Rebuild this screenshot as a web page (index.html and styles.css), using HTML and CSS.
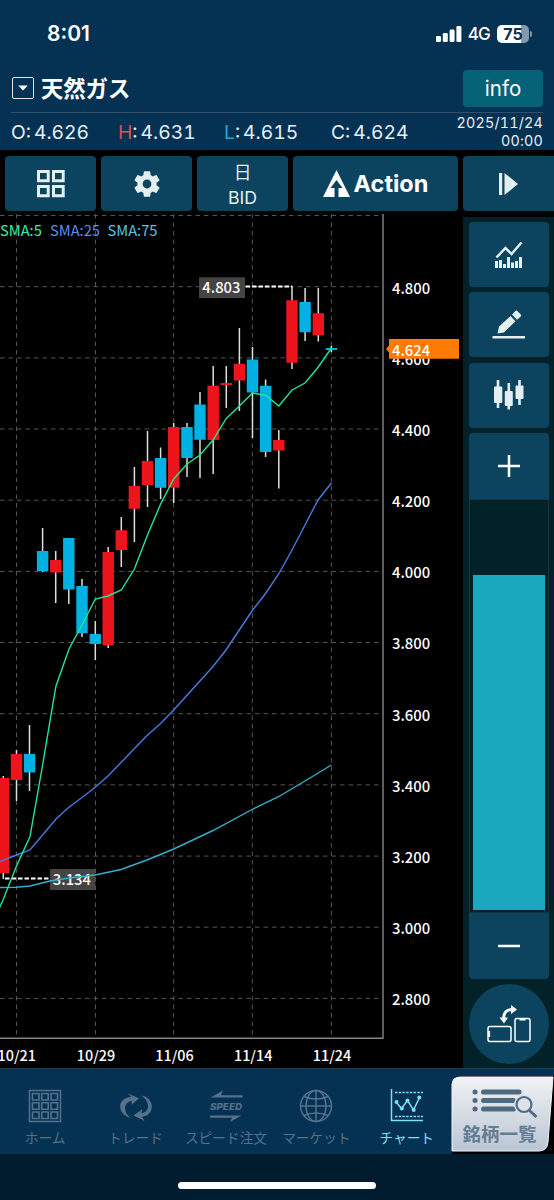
FILE: index.html
```html
<!DOCTYPE html>
<html lang="ja">
  <head>
    <meta charset="UTF-8" />
    <meta name="viewport" content="width=device-width, initial-scale=1.0" />
    <title>天然ガス チャート</title>
    <link rel="stylesheet" href="styles.css">
  </head>
  <body>
    <header class="header">
      <div class="status-bar">
        <span class="clock">8:01</span>
        <div class="status-right">
          <svg class="signal" width="26" height="16" viewBox="0 0 26 16" fill="#fff">
            <rect x="0" y="10" width="5" height="6" rx="1.3" />
            <rect x="6.8" y="7" width="5" height="9" rx="1.3" />
            <rect x="13.6" y="3.6" width="5" height="12.4" rx="1.3" />
            <rect x="20.4" y="0" width="5" height="16" rx="1.3" />
          </svg>
          <span class="network">4G</span>
          <span class="battery">75</span>
          <span class="battery-tip"></span>
        </div>
      </div>

      <div class="title-row">
        <span class="dropdown"><svg width="20" height="20" viewBox="0 0 20 20"><path d="M5.3 7.5h9.4L10 12.6z" fill="#fff" /></svg></span>
        <h1>天然ガス</h1>
        <button class="info-button">info</button>
      </div>

      <div class="ohlc">
        <span class="open">O:<b>4.626</b></span>
        <span class="high"><i>H</i>:<b>4.631</b></span>
        <span class="low"><i>L</i>:<b>4.615</b></span>
        <span class="close">C:<b>4.624</b></span>
        <div class="date">2025/11/24<br>00:00</div>
      </div>
    </header>

    <nav class="toolbar">
      <button class="tool">
        <svg width="28" height="28" viewBox="0 0 28 28" fill="none" stroke="#e4eff2" stroke-width="3">
          <path d="M1.5 1.5h9.7v9.2H1.5zM16.5 1.5h9.7v9.2h-9.7zM1.5 16.5h9.7v9.2H1.5zM16.5 16.5h9.7v9.2h-9.7z" />
        </svg>
      </button>
      <button class="tool">
        <svg width="32" height="32" viewBox="0 0 24 24" fill="#e4eff2">
          <path d="M19.14 12.94c.04-.3.06-.61.06-.94 0-.32-.02-.64-.07-.94l2.03-1.58c.18-.14.23-.41.12-.61l-1.92-3.32c-.12-.22-.37-.29-.59-.22l-2.39.96c-.5-.38-1.03-.7-1.62-.94l-.36-2.54c-.04-.24-.24-.41-.48-.41h-3.84c-.24 0-.43.17-.47.41l-.36 2.54c-.59.24-1.13.57-1.62.94l-2.39-.96c-.22-.08-.47 0-.59.22L2.74 8.87c-.12.21-.08.47.12.61l2.03 1.58c-.05.3-.09.63-.09.94s.02.64.07.94l-2.03 1.58c-.18.14-.23.41-.12.61l1.92 3.32c.12.22.37.29.59.22l2.39-.96c.5.38 1.03.7 1.62.94l.36 2.54c.05.24.24.41.48.41h3.84c.24 0 .44-.17.47-.41l.36-2.54c.59-.24 1.13-.56 1.62-.94l2.39.96c.22.08.47 0 .59-.22l1.92-3.32c.12-.22.07-.47-.12-.61l-2.01-1.58zM12 15.3c-1.8 0-3.3-1.5-3.3-3.3s1.5-3.3 3.3-3.3 3.3 1.5 3.3 3.3-1.5 3.3-3.3 3.3z" />
        </svg>
      </button>
      <button class="tool period"><span>日</span><span>BID</span></button>
      <button class="tool action">
        <svg width="27" height="27" viewBox="0 0 27 27"><path d="M13.5 0L27 27h-11.5v-9h4L13.5 10l-6 8h4v9H0z" fill="#fff" /></svg>
        Action
      </button>
      <button class="tool last">
        <svg width="20" height="24" viewBox="0 0 20 24" fill="#e4eff2"><path d="M0 1h3.2v22H0zM5.5 1L19 12 5.5 23z" /></svg>
      </button>
    </nav>

    <main class="main">
      <svg class="chart" width="463" height="854" viewBox="0 214 463 854">
        <!-- grid -->
        <path class="grid" d="M0 215.5H383M0 286.7H383M0 357.9H383M0 429H383M0 500.2H383M0 571.4H383M0 642.5H383M0 713.7H383M0 784.9H383M0 856.1H383M0 927.2H383M0 998.4H383M16.5 214V1038M95.5 214V1038M173.7 214V1038M252.3 214V1038M331.4 214V1038" />
        <path class="axis" d="M0 1038.3H383V214" />

        <!-- wicks -->
        <path class="wick" d="M3.3 776V879M16.5 750V801M29.5 725V791M42.6 528V572M55.7 551V603M68.8 538V604M82 579V637M95.3 621V660M108.2 547V648M121.3 517V567M134.4 467V542M147.5 431V507M160.6 447.5V499M173.7 423V503M187 423V477M200 392V478M213.2 366V474M226.3 366V408M239.4 328V411M252.5 347V438M265.6 379.5V457M278.8 430V488.5M292 286V369M305.1 288V341M318.3 288V341.5M331.4 346V352" />

        <!-- candle bodies -->
        <path class="up" d="M3.3 778V873M16.5 754V780M55.7 560V572.5M108.2 552V645.3M121.3 530.3V550M134.4 486V508.7M147.5 461V485.3M173.7 427V487.7M213.2 385.7V440M226.3 383V385M239.4 363.8V380.5M278.8 440V450.5M292 300.3V362.8M318.3 313.3V335.3" />
        <path class="down" d="M29.5 754V772.5M42.6 551V571M68.8 538V589.4M82 586V633.3M95.3 634V644M160.6 458V487.7M187 427V458M200 404.4V439.8M252.5 359.4V392.4M265.6 385.8V452M305.1 302V332.3M331.4 348V350" />

        <!-- price marks -->
        <rect x="199" y="277.3" width="46" height="20.7" fill="#444" />
        <text class="mark" x="202.3" y="293.3">4.803</text>
        <path class="mark-line" d="M245.5 286.5H292" />
        <rect x="50" y="869" width="45.3" height="21" fill="#444" />
        <text class="mark" x="52.8" y="885.3">3.134</text>
        <path class="mark-line" d="M5 878.5H50" />

        <!-- moving averages -->
        <polyline class="sma75" points="0,887.5 16,887.3 30,886 50,881 69,878 95,875 121,869.5 147,860 173.7,849 213,830.5 252,809.5 279,796.5 305,781 331.4,765" />
        <polyline class="sma25" points="0,861.5 16.5,855 30,850 56,819 68,808 82,797.5 95.5,787 108,776 147,735.5 160.6,723.5 173.7,710 213,666.5 226,650 252.3,610.5 265.6,593.5 279,573.5 292,550 305,525 318,500 331.4,483" />
        <polyline class="sma5" points="-2,911 3,900 16.5,866 30,836.5 42.6,765 53.5,700 56,686 69,649 82,625 95.3,599 108,596 121.3,590 134.4,569 147.5,535 160.6,504 173.7,479 187,464 200,455 213,440 226.3,418.5 239.4,406 252.5,393 266,395.5 278.8,406 292,390 305,383 318.3,367 331.4,348" />

        <g class="legend">
          <text x="0" y="236" fill="#35f0a5">SMA:5</text>
          <text x="50" y="236" fill="#5f8def">SMA:25</text>
          <text x="107.5" y="236" fill="#57c3e0">SMA:75</text>
        </g>

        <g class="labels">
          <text x="392" y="293.5">4.800</text>
          <text x="392" y="364.5">4.600</text>
          <text x="392" y="435.8">4.400</text>
          <text x="392" y="507">4.200</text>
          <text x="392" y="578.2">4.000</text>
          <text x="392" y="649.3">3.800</text>
          <text x="392" y="720.5">3.600</text>
          <text x="392" y="791.7">3.400</text>
          <text x="392" y="862.8">3.200</text>
          <text x="392" y="934">3.000</text>
          <text x="392" y="1005.2">2.800</text>
        </g>
        <g class="labels dates">
          <text x="16.7" y="1061">10/21</text>
          <text x="96" y="1061">10/29</text>
          <text x="174.5" y="1061">11/06</text>
          <text x="253.2" y="1061">11/14</text>
          <text x="332" y="1061">11/24</text>
        </g>

        <path d="M386 349l3-3.5V339h70v19.7h-70v-6.2z" fill="#ff7a00" />
        <text class="mark" x="392" y="355.7">4.624</text>
      </svg>

      <aside class="sidebar">
        <button class="side">
          <svg width="28" height="28" viewBox="0 0 28 28">
            <path d="M1.5 16.5L10.5 7l6 6L26.500 1.5" fill="none" stroke="#e4eff2" stroke-width="2.5" />
            <path d="M0 20h3v7H0zM4 19h3v8H4zM8 23h3v4H8zM12 16h3v11h-3zM16 21.5h3V27h-3zM20 20h3v7h-3zM24 16h3v11h-3z" fill="#e4eff2" />
          </svg>
        </button>
        <button class="side">
          <svg width="34" height="32" viewBox="0 0 34 32" fill="#e4eff2">
            <path d="M7 17.5L18.5 7l5 5.2L12 23.5l-6.500 1zM20 5.600L23.300 2q1-.8 2 0l3.500 3.500q.7.900 0 1.900L25 10.800z" />
            <path d="M.5 27h32.500v2.500H.5z" />
          </svg>
        </button>
        <button class="side">
          <svg width="32" height="30" viewBox="0 0 32 30" fill="#e4eff2">
            <path d="M3.700 0h2.600v28H3.700zM14.500 3h2.600v26.500h-2.600zM25.200 0h2.600v25h-2.600z" />
            <rect x="1" y="6.500" width="8.300" height="16.500" rx="1" />
            <rect x="11.800" y="11" width="8" height="15" rx="1" />
            <rect x="22.500" y="5.500" width="8" height="13.500" rx="1" />
          </svg>
        </button>
        <div class="zoom">
          <button class="zoom-in"><svg width="22" height="22" viewBox="0 0 22 22"><path d="M0 11h22M11 0v22" stroke="#fff" stroke-width="2.500" /></svg></button>
          <div class="slider"><div class="slider-fill"></div></div>
          <button class="zoom-out"><svg width="22" height="22" viewBox="0 0 22 22"><path d="M0 11h22" stroke="#fff" stroke-width="2.500" /></svg></button>
        </div>
        <button class="rotate">
          <svg width="44" height="38" viewBox="0 0 44 38" fill="none" stroke="#fff" stroke-width="1.500">
            <rect x="1" y="21.500" width="23" height="15" rx="2" />
            <rect x="28" y="13.500" width="15" height="23" rx="2" />
            <path d="M2 26v6M32.500 14.500h6" stroke-width="2.200" />
            <path d="M16.500 14C16.500 8 19.500 4.500 25 4.500" stroke-width="2.800" />
            <path d="M24 0l6 4.500-6 4.500zM12.500 12.500h8.500l-4 6z" fill="#fff" stroke="none" />
          </svg>
        </button>
      </aside>
    </main>

    <nav class="tabs">
      <a class="tab">
        <svg width="34" height="34" viewBox="0 0 34 34" fill="none" stroke="currentColor" stroke-width="1.500">
          <path d="M1.500 1.500h31v31h-31z" />
          <path d="M4.500 4.500h6.500V11H4.500zM13.700 4.500h6.500V11h-6.500zM23 4.500h6.500V11H23zM4.500 13.700h6.500v6.500H4.500zM13.700 13.700h6.500v6.500h-6.500zM23 13.700h6.500v6.500H23zM4.500 23h6.500v6.500H4.500zM13.700 23h6.500v6.500h-6.500zM23 23h6.500v6.500H23z" stroke-width="1.600" />
        </svg>
        <span>ホーム</span>
      </a>
      <a class="tab">
        <svg width="34" height="34" viewBox="0 0 34 34" fill="currentColor">
          <path d="M12 29C-2 26-3 8.500 12.500 8L9 4.500l11 4.800L12.500 16l.5-4C4.500 13 3.500 23.500 12 29z" />
          <path d="M22 6.500C35 8 37.500 25.500 23 28l2.500 4-11-5.500 9-6.500-1 4.200C31 23 31.500 12 22 6.500z" />
        </svg>
        <span>トレード</span>
      </a>
      <a class="tab">
        <svg width="34" height="34" viewBox="0 0 34 34" fill="currentColor">
          <path d="M1.500 8.500L14 1.500l-2 4.800h21.500v2.200zM32.500 26.500L21 33l2-4.300H1v-2.200z" />
          <text class="speed" x="1" y="21" textLength="32" lengthAdjust="spacingAndGlyphs">SPEED</text>
        </svg>
        <span>スピード注文</span>
      </a>
      <a class="tab">
        <svg width="34" height="34" viewBox="0 0 34 34" fill="none" stroke="currentColor" stroke-width="1.500">
          <circle cx="17" cy="17" r="15.500" />
          <ellipse cx="17" cy="17" rx="10" ry="15.500" />
          <path d="M17 1.500v31M1.500 17h31M5 7.500q12 5 24 0M5 26.500q12-5 24 0" />
        </svg>
        <span>マーケット</span>
      </a>
      <a class="tab active">
        <svg width="34" height="34" viewBox="0 0 34 34" fill="none" stroke="currentColor" stroke-width="1.500">
          <path d="M1.500 0v31.500H33" />
          <path d="M5 3.500h28M5 27.500h28" stroke-dasharray="2.500 1.200" stroke-width="1.300" />
          <path d="M6 13l5.500 6.500L17.500 11.500l6 9.500L29.500 8.500" />
          <g fill="currentColor" stroke="none"><circle cx="6.500" cy="13" r="2" /><circle cx="11.800" cy="19.500" r="2" /><circle cx="17.500" cy="11.500" r="2" /><circle cx="23.700" cy="21" r="2" /><circle cx="29.300" cy="8.500" r="2" /></g>
        </svg>
        <span>チャート</span>
      </a>
      <a class="tab watchlist">
        <svg class="watch-bg" width="103" height="78" viewBox="0 0 103 78">
          <defs><linearGradient id="silver" x1="0" y1="0" x2="0" y2="1"><stop offset="0" stop-color="#f1f2f4" /><stop offset="1" stop-color="#bac6d4" /></linearGradient></defs>
          <path d="M1 78V8q0-8 8-8h94v78z" fill="#000" />
          <path d="M1 75V9q0-8 8-8h93l-5 65q-.7 9-9 9z" fill="url(#silver)" stroke="#f2f5f8" />
        </svg>
        <svg class="watch-icon" width="66" height="32" viewBox="0 0 66 32" fill="none" stroke="#4e6a82">
          <path d="M11.500 5H47M11.500 13.500h30M11.500 22h30" stroke-width="5" stroke-linecap="round" />
          <path d="M3 5h.1M3 13.500h.1M3 22h.1" stroke-width="5" stroke-linecap="round" />
          <circle cx="52" cy="17.500" r="10" fill="#dde2e8" stroke="none" />
          <circle cx="52" cy="17.500" r="7.500" stroke-width="2.200" />
          <path d="M57.500 23.500l7 6.500" stroke-width="3" />
        </svg>
        <span>銘柄一覧</span>
      </a>
    </nav>
    <footer class="footer"><div class="home-indicator"></div></footer>
  </body>
</html>
```
FILE: styles.css
```css
* {
  box-sizing: border-box;
}

body {
  margin: 0;
  width: 554px;
  height: 1200px;
  overflow: hidden;
  background: #000;
  color: #fff;
  font-family: Inter, "Noto Sans CJK JP", sans-serif;
}

button {
  border: none;
  padding: 0;
  color: inherit;
  font-family: inherit;
  background: #0c435f;
  display: flex;
  align-items: center;
  justify-content: center;
}

svg {
  display: block;
  flex-shrink: 0;
}

.header {
  height: 150px;
  background: #053152;
}

.status-bar {
  height: 69px;
  padding: 0 23px 2px 47px;
  display: flex;
  justify-content: space-between;
  align-items: center;
}

.clock {
  font-size: 21px;
  font-weight: 600;
}

.status-right {
  display: flex;
  align-items: center;
  margin-right: -1px;
}

.signal {
  margin-right: 1px;
}

.network {
  font-size: 17px;
  margin: 1px 7px 0 5px;
  letter-spacing: -0.8px;
  font-weight: 500;
}

.battery {
  width: 32px;
  height: 18px;
  border-radius: 5px;
  background: linear-gradient(90deg, #fff 75%, #8497ab 75%);
  color: #053152;
  font-size: 16px;
  font-weight: 700;
  line-height: 18px;
  text-align: center;
}

.battery-tip {
  width: 2px;
  height: 6px;
  margin-left: 1px;
  border-radius: 0 2px 2px 0;
  background: #8497ab;
}

.title-row {
  height: 44px;
  margin: 0 11px;
  border-bottom: 1px solid #30506c;
  display: flex;
  align-items: center;
  padding-bottom: 5px;
}

.dropdown {
  width: 22px;
  height: 22px;
  border: 1px solid #dce6ee;
  border-radius: 2px;
  margin-left: 1px;
}

h1 {
  margin: -2px 0 0 7px;
  font-family: "Noto Sans CJK JP", sans-serif;
  font-size: 22.3px;
  font-weight: 700;
  line-height: 30px;
}

.info-button {
  width: 80px;
  height: 37px;
  margin-left: auto;
  border-radius: 4px;
  background: #056277;
  font-size: 20.5px;
}

.ohlc {
  height: 37px;
  padding: 1px 11px 0;
  display: flex;
  align-items: center;
  font-size: 19.3px;
  line-height: 37px;
  color: #e4f0f8;
  font-variant-numeric: tabular-nums;
}

.ohlc b {
  font-weight: 400;
  margin-left: 3px;
}

.ohlc i {
  font-style: normal;
}

.ohlc span {
  width: 106px;
  white-space: nowrap;
}

.ohlc .open,
.ohlc .low {
  width: 107px;
}

.high i {
  color: #df4f59;
}

.low i {
  color: #24a5dc;
}

.date {
  margin-left: auto;
  font-size: 14.3px;
  line-height: 18.5px;
  letter-spacing: 0.2px;
  text-align: right;
  white-space: nowrap;
}

.toolbar {
  height: 64px;
  padding: 6px 0 0 5px;
  display: flex;
  gap: 5px;
}

.tool {
  width: 91px;
  height: 55px;
  border-radius: 4px;
  flex-shrink: 0;
}

.period {
  flex-direction: column;
  padding-top: 2px;
  font-size: 17.7px;
  line-height: 25px;
  color: #e4eff2;
}

.action {
  width: 165px;
  gap: 4px;
  font-size: 23.5px;
  font-weight: 700;
}

.last {
  border-radius: 4px 0 0 4px;
}

.main {
  height: 854px;
  display: flex;
}

.chart {
  font-family: "Noto Sans CJK JP", sans-serif;
  font-weight: 500;
}

.grid {
  stroke: #555;
  stroke-width: 1;
  stroke-dasharray: 4.5 4;
}

.axis {
  fill: none;
  stroke: #858585;
  stroke-width: 1.4;
}

.wick {
  stroke: #ddd;
  stroke-width: 1.5;
}

.up {
  stroke: #ed151b;
  stroke-width: 11.4;
}

.down {
  stroke: #00b2e3;
  stroke-width: 11.4;
}

.mark-line {
  stroke: #fff;
  stroke-width: 1.8;
  stroke-dasharray: 4.5 2;
}

.mark,
.labels {
  font-size: 14.8px;
  fill: #fff;
}

.dates {
  font-size: 14.4px;
  text-anchor: middle;
}

.legend {
  font-size: 14.7px;
  font-weight: 400;
}

.sma5,
.sma25,
.sma75 {
  fill: none;
  stroke-width: 1.4;
}

.sma5 {
  stroke: #20e698;
}

.sma25 {
  stroke: #487ddd;
}

.sma75 {
  stroke: #35b0cc;
}

.sidebar {
  width: 91px;
  height: 851px;
  margin-top: 3px;
  padding: 5px 5px 4px 6px;
  background: #022129;
  display: flex;
  flex-direction: column;
  gap: 5.3px;
}

.side {
  height: 65px;
  border-radius: 4px;
  flex-shrink: 0;
}

.zoom {
  height: 546px;
  flex-shrink: 0;
  display: flex;
  flex-direction: column;
}

.zoom-in {
  height: 66px;
  border-radius: 4px 4px 0 0;
}

.slider {
  flex: 1;
  border: 1px solid #18343d;
  padding: 0 3px 2px;
  display: flex;
  align-items: flex-end;
}

.slider-fill {
  width: 100%;
  height: 335px;
  background: #19a8bd;
}

.zoom-out {
  height: 66px;
  border-radius: 0 0 4px 4px;
}

.rotate {
  width: 80px;
  height: 80px;
  border-radius: 50%;
  flex-shrink: 0;
}

.tabs {
  height: 86px;
  background: #053152;
  border-top: 1px solid #20394c;
  display: flex;
}

.tab {
  width: 90.4px;
  padding-top: 20px;
  flex-shrink: 0;
  display: flex;
  flex-direction: column;
  align-items: center;
  color: #54728b;
  font-family: "Noto Sans CJK JP", sans-serif;
  font-size: 13.7px;
  line-height: 20px;
  white-space: nowrap;
}

.tab span {
  margin-top: 4px;
}

.tab.active {
  color: #7be0fa;
}

.speed {
  font: italic 800 9.5px Inter, sans-serif;
}

.watchlist {
  width: 102px;
  padding-top: 18px;
  position: relative;
}

.watch-bg {
  position: absolute;
  left: -1px;
  top: 7px;
}

.watch-icon {
  position: relative;
  margin-left: 4px;
}

.tab.watchlist span {
  position: relative;
  margin: 4px 7px 0 0;
  font-size: 18.5px;
  font-weight: 700;
  color: #647d93;
}

.footer {
  height: 46px;
  padding-top: 28px;
  background: #021c2f;
}

.home-indicator {
  width: 198px;
  height: 7px;
  margin: 0 auto;
  border-radius: 4px;
  background: #fff;
}
```
